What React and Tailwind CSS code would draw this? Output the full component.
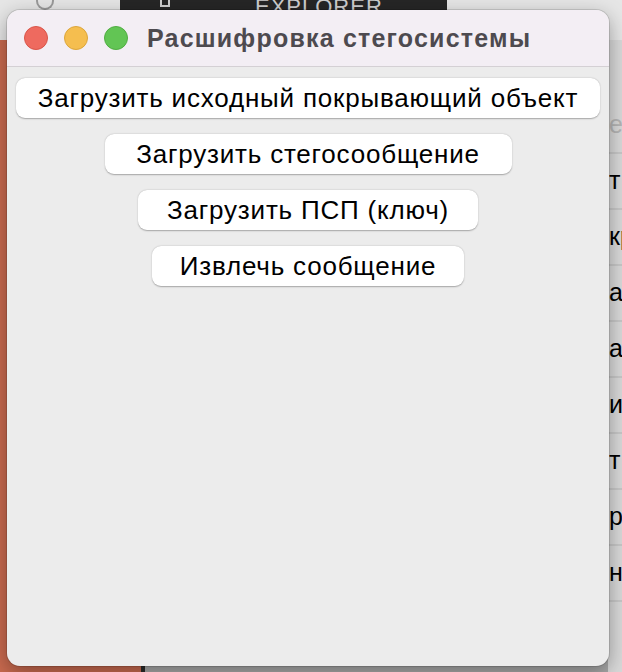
import React from "react";

const rows = [
  { t: "e c", y: "text-[#b5b5b5]" },
  { t: "т" },
  { t: "кр" },
  { t: "ат" },
  { t: "ат" },
  { t: "и" },
  { t: "т" },
  { t: "ре" },
  { t: "нс" },
];

function Btn({ children, w }) {
  return (
    <button
      className={`h-[40px] ${w} rounded-[9px] bg-white text-black text-[26px] tracking-[0.8px] leading-none shadow-[0_0.5px_1.5px_rgba(0,0,0,0.3)] flex items-center justify-center whitespace-nowrap`}
      style={{ fontFamily: '"Liberation Sans", Arial, sans-serif' }}
    >
      {children}
    </button>
  );
}

export default function App() {
  return (
    <div
      className="relative w-[622px] h-[672px] overflow-hidden bg-[#d8d8d8]"
      style={{ fontFamily: '"Liberation Sans", Arial, sans-serif' }}
    >
      {/* desktop background */}
      <div className="flex flex-col w-full h-full">
        <div className="h-[40px] flex">
          <div className="w-[120px] bg-[#e6e6e6] flex items-start pl-[36px] gap-[58px]">
            <div className="w-[18px] h-[10px] border-2 border-t-0 border-[#9a9a9a] rounded-b-full"></div>
          </div>
          <div className="w-[327px] bg-[#262626] relative">
            <div className="absolute left-[40px] -top-[2px] w-[10px] h-[9px] border-2 border-t-0 border-[#cfcfcf]"></div>
            <div className="absolute left-[135px] -top-[10px] text-[#cfcfcf] text-[22px] tracking-[1px]">EXPLORER</div>
          </div>
          <div className="flex-1 bg-[#e6e6e6]"></div>
        </div>
        <div className="flex-1 flex">
          <div className="w-[145px] bg-[#c96a4f] flex justify-end">
            <div className="w-[4px] bg-[#2a2a2a]"></div>
          </div>
          <div className="flex-1 bg-[#a9a9a9] flex justify-end">
            <div className="w-[14px] bg-[#d9d9d9] flex flex-col pt-[58px]">
              {rows.map((r, i) => (
                <div
                  key={i}
                  className={`h-[56px] border-b-[2px] border-[#c8c8c8] flex items-center overflow-hidden text-[25px] whitespace-nowrap ${r.y || "text-black"}`}
                >
                  <span className="pl-[1px]">{r.t}</span>
                </div>
              ))}
            </div>
          </div>
        </div>
      </div>

      {/* window */}
      <div className="absolute left-[7px] top-[10px] w-[602px] h-[656px] rounded-[13px] bg-[#ececec] overflow-hidden flex flex-col shadow-[0_0_0_1px_rgba(0,0,0,0.12),0_6px_20px_rgba(0,0,0,0.35)]">
        <div className="h-[57px] bg-[#f3eef4] border-b border-[#d4d0d4] flex items-center pl-[17px]">
          <div className="flex gap-[16px]">
            <div className="w-[24px] h-[24px] rounded-full bg-[#ee6a5f] border border-[#d95549]"></div>
            <div className="w-[24px] h-[24px] rounded-full bg-[#f5be4f] border border-[#dca63b]"></div>
            <div className="w-[24px] h-[24px] rounded-full bg-[#62c554] border border-[#50ad42]"></div>
          </div>
          <div className="ml-[19px] text-[25px] tracking-[1.2px] font-bold text-[#4d4a4f] leading-none whitespace-nowrap">
            Расшифровка стегосистемы
          </div>
        </div>
        <div className="flex flex-col items-center gap-[16px] pt-[11px]">
          <Btn w="w-[584px]">Загрузить исходный покрывающий объект</Btn>
          <Btn w="w-[407px]">Загрузить стегосообщение</Btn>
          <Btn w="w-[340px]">Загрузить ПСП (ключ)</Btn>
          <Btn w="w-[312px]">Извлечь сообщение</Btn>
        </div>
      </div>
    </div>
  );
}
